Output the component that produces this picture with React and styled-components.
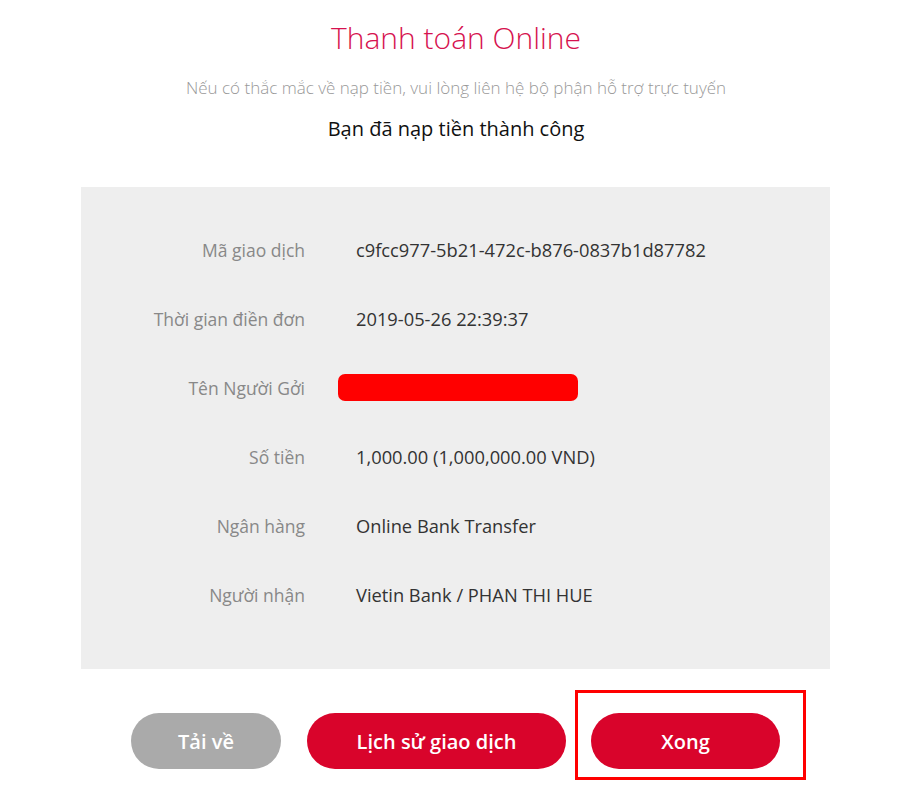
import React from 'react';
import styled, { createGlobalStyle } from 'styled-components';

const GlobalStyle = createGlobalStyle`
  html, body {
    margin: 0;
    padding: 0;
    background: #ffffff;
  }
  body {
    font-family: "Open Sans", "Noto Sans", sans-serif;
  }
`;

const Page = styled.div`
  box-sizing: border-box;
  width: 898px;
  padding-left: 14px;
  display: flex;
  flex-direction: column;
  align-items: center;
`;

const Title = styled.h1`
  margin: 16px 0 0;
  font-size: 30px;
  font-weight: 300;
  line-height: 44px;
  color: #d6124f;
`;

const Notice = styled.p`
  margin: 17px 0 0;
  font-size: 17px;
  font-weight: 300;
  color: #999999;
  line-height: 22px;
`;

const Success = styled.p`
  margin: 17px 0 0;
  font-size: 20px;
  color: #111111;
  line-height: 26px;
`;

const Panel = styled.div`
  align-self: stretch;
  margin: 45px 68px 0 67px;
  padding: 28px 0 40px;
  background: #eeeeee;
`;

const Row = styled.div`
  display: grid;
  grid-template-columns: 224px 1fr;
  column-gap: 51px;
  align-items: center;
  height: 69px;
`;

const Label = styled.span`
  text-align: right;
  font-size: 17.5px;
  color: #888888;
`;

const Value = styled.span`
  font-size: 18.3px;
  color: #333333;
`;

const Redacted = styled.span`
  display: block;
  width: 240px;
  height: 27px;
  margin-left: -18px;
  border-radius: 7px;
  background: #ff0000;
`;

const Actions = styled.div`
  display: flex;
  align-items: flex-start;
  align-self: flex-start;
  margin: 21px 0 0 117px;
  gap: 9px;
`;

const Button = styled.button`
  width: ${({ $w }) => $w}px;
  height: 56px;
  margin-top: ${({ $top }) => $top || 0}px;
  margin-right: ${({ $gap }) => $gap || 0}px;
  border: none;
  border-radius: 28px;
  background: ${({ $muted }) => ($muted ? '#aaaaaa' : '#d9042b')};
  color: #ffffff;
  font-family: "Open Sans", "Noto Sans", sans-serif;
  font-size: 20px;
  font-weight: 600;
  cursor: pointer;
`;

const Highlight = styled.div`
  border: 3px solid #ff0000;
  padding: 20px 23px 8px 13px;
`;

const rows = [
  ['Mã giao dịch', 'c9fcc977-5b21-472c-b876-0837b1d87782'],
  ['Thời gian điền đơn', '2019-05-26 22:39:37'],
  ['Tên Người Gởi', null],
  ['Số tiền', '1,000.00 (1,000,000.00 VND)'],
  ['Ngân hàng', 'Online Bank Transfer'],
  ['Người nhận', 'Vietin Bank / PHAN THI HUE'],
];

export default function App() {
  return (
    <>
      <GlobalStyle />
      <Page>
        <Title>Thanh toán Online</Title>
        <Notice>Nếu có thắc mắc về nạp tiền, vui lòng liên hệ bộ phận hỗ trợ trực tuyến</Notice>
        <Success>Bạn đã nạp tiền thành công</Success>
        <Panel>
          {rows.map(([label, value]) => (
            <Row key={label}>
              <Label>{label}</Label>
              {value ? <Value>{value}</Value> : <Redacted />}
            </Row>
          ))}
        </Panel>
        <Actions>
          <Button $muted $w={150} $top={23} $gap={17}>Tải về</Button>
          <Button $w={259} $top={23}>Lịch sử giao dịch</Button>
          <Highlight>
            <Button $w={189}>Xong</Button>
          </Highlight>
        </Actions>
      </Page>
    </>
  );
}
